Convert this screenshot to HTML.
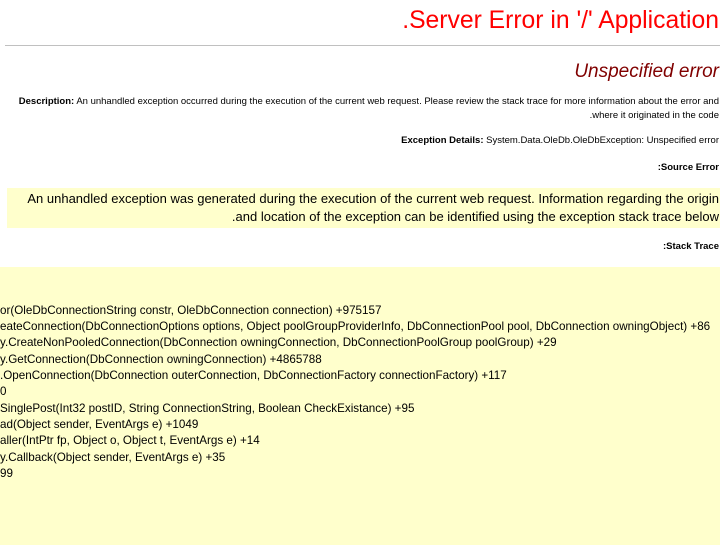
<!DOCTYPE html>
<html><head><meta charset="utf-8"><style>
body{margin:0;background:#fff;font-family:"Liberation Sans",sans-serif;width:727px;height:545px;overflow:hidden;position:relative}
.a{position:absolute;white-space:nowrap}
.r{right:8px;text-align:right}
.s{font-size:9.5px;color:#000}
.tr{position:absolute;left:0;top:267px;width:720px;height:278px;background:#ffffcc;overflow:hidden}
.tr div{position:absolute;left:0;font-size:12px;white-space:nowrap;transform:scaleX(.97);transform-origin:0 0}
</style></head><body>
<div class="a r" style="top:7px;font-size:24.7px;color:#f00">.Server Error in '/' Application</div>
<div class="a" style="left:5px;top:45px;width:715px;height:1px;background:#c0c0c0"></div>
<div class="a r" style="top:61px;font-size:19px;font-style:italic;color:#800000">Unspecified error</div>
<div class="a r s" style="top:96px"><b>Description:</b> An unhandled exception occurred during the execution of the current web request. Please review the stack trace for more information about the error and</div>
<div class="a r s" style="top:110px">.where it originated in the code</div>
<div class="a r s" style="top:135px"><b>Exception Details:</b> System.Data.OleDb.OleDbException: Unspecified error</div>
<div class="a r s" style="top:162px"><b>:Source Error</b></div>
<div class="a" style="left:7px;top:188px;width:713px;height:40px;background:#ffffcc"></div>
<div class="a r" style="top:190px;font-size:13px;line-height:18px">An unhandled exception was generated during the execution of the current web request. Information regarding the origin<br>.and location of the exception can be identified using the exception stack trace below</div>
<div class="a r s" style="top:241px"><b>:Stack Trace</b></div>
<div class="tr">
<div style="top:36px">or(OleDbConnectionString constr, OleDbConnection connection) +975157</div>
<div style="top:52px">eateConnection(DbConnectionOptions options, Object poolGroupProviderInfo, DbConnectionPool pool, DbConnection owningObject) +86</div>
<div style="top:68px">y.CreateNonPooledConnection(DbConnection owningConnection, DbConnectionPoolGroup poolGroup) +29</div>
<div style="top:85px">y.GetConnection(DbConnection owningConnection) +4865788</div>
<div style="top:101px">.OpenConnection(DbConnection outerConnection, DbConnectionFactory connectionFactory) +117</div>
<div style="top:117px">0</div>
<div style="top:134px">SinglePost(Int32 postID, String ConnectionString, Boolean CheckExistance) +95</div>
<div style="top:150px">ad(Object sender, EventArgs e) +1049</div>
<div style="top:166px">aller(IntPtr fp, Object o, Object t, EventArgs e) +14</div>
<div style="top:183px">y.Callback(Object sender, EventArgs e) +35</div>
<div style="top:199px">99</div>
</div>
</body></html>
